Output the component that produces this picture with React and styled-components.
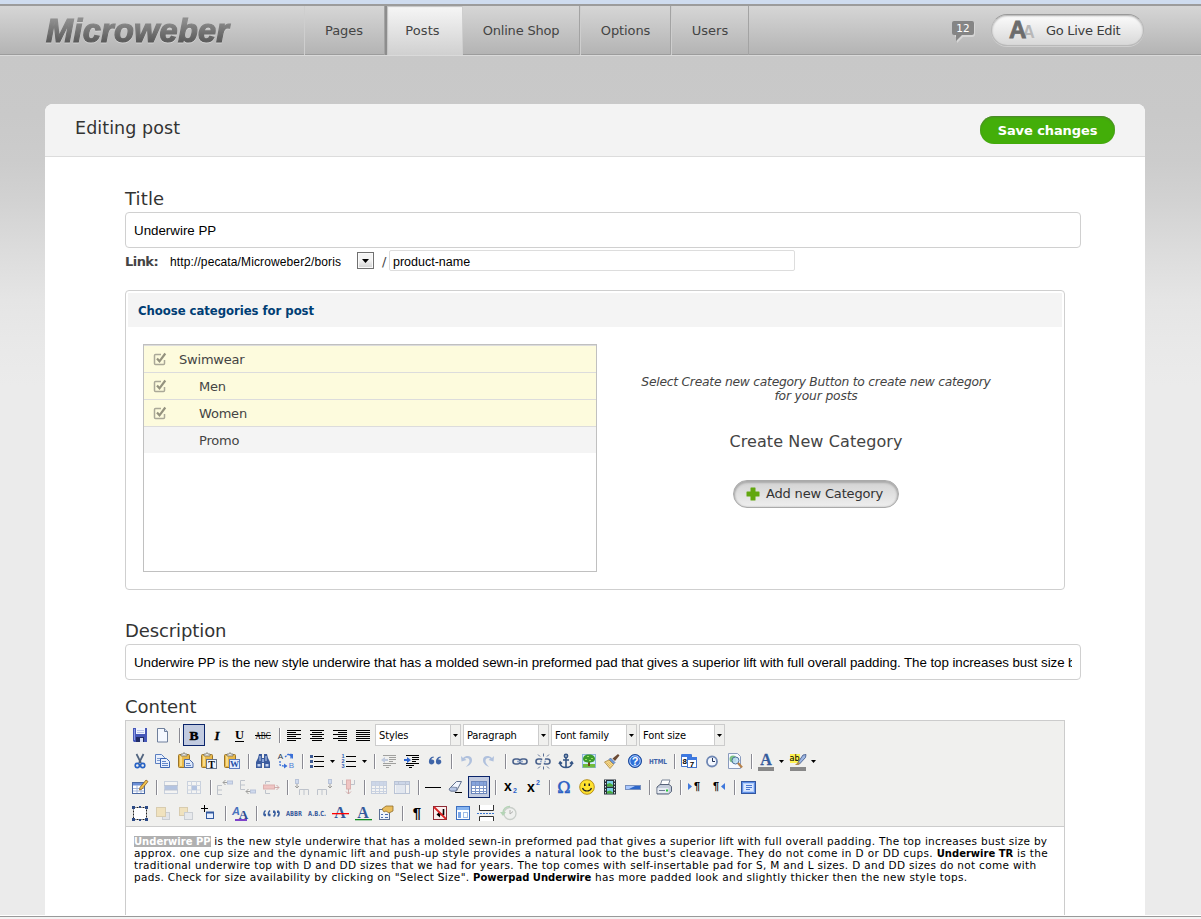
import React from "react";
import styled, { createGlobalStyle, css } from "styled-components";

const verdana = `Verdana, "DejaVu Sans", sans-serif`;
const arial = `"Liberation Sans", Arial, sans-serif`;
const tahoma = `"DejaVu Sans Condensed", "DejaVu Sans", Tahoma, sans-serif`;

const GlobalStyle = createGlobalStyle`
  * { box-sizing: border-box; }
  body { margin: 0; overflow: hidden; font-family: ${verdana}; font-size: 13px; color: #444; }
  p, h1, h2, h3, ul { margin: 0; padding: 0; font-weight: normal; }
  input, button { font-family: inherit; }
  svg { overflow: visible; flex: none; }
`;

const Page = styled.div`
  width: 1201px;
  height: 919px;
  display: flex;
  flex-direction: column;
  overflow: hidden;
  background: #f3f3f3;
`;

const TopStrip = styled.div`
  height: 4px;
  flex: none;
  background: #cfdcef;
`;

const Header = styled.header`
  height: 52px;
  flex: none;
  display: flex;
  border-top: 2px solid #9c9c9c;
  border-bottom: 1px solid #dadada;
  background: linear-gradient(#d6d6d6, #b3b3b3);
  box-shadow: inset 0 -1px #9c9c9c;
`;

const LogoBox = styled.div`
  width: 304px;
  padding: 6px 0 0 42px;
  flex: none;
  svg { filter: drop-shadow(0 1px 0 #d4d4d4); }
`;

const Nav = styled.nav`
  display: flex;
  flex: 1;
`;

const NavItem = styled.a`
  width: ${(p) => p.$w}px;
  padding-top: 16px;
  padding-right: ${(p) => p.$pull || 0}px;
  line-height: 17px;
  font-size: 13px;
  letter-spacing: ${(p) => p.$ls || 0}px;
  text-align: center;
  color: #444;
  border-left: 1px solid #cecece;
  border-right: 1px solid #a3a3a3;
  ${(p) =>
    p.$active &&
    css`
      border-left: 2px solid #8d8d8d;
      border-right: none;
      background: linear-gradient(#f6f6f6, #d0d0d0);
      box-shadow: inset 2px 2px 1px -1px #c4c4c4;
    `}
`;

const HeaderTools = styled.div`
  display: flex;
  align-items: flex-start;
  padding-right: 57px;
`;

const BubbleBox = styled.div`
  padding-top: 13px;
  margin-right: 15px;
  height: 40px;
`;

const LiveButton = styled.button`
  width: 153px;
  height: 32px;
  margin-top: 8px;
  padding: 0 0 0 17px;
  display: flex;
  align-items: center;
  gap: 11px;
  border: 1px solid #b9b9b9;
  border-top-color: #999;
  border-radius: 16px;
  background: linear-gradient(#fcfcfc, #d8d8d8);
  box-shadow: inset 0 1px 2px #aaa, 0 1px 0 #cfcfcf;
  font-size: 13px;
  letter-spacing: -0.3px;
  color: #3c3c3c;
`;

const Main = styled.main`
  height: 859px;
  flex: none;
  overflow: hidden;
  padding: 48px 56px 0 45px;
  background: linear-gradient(
    #c8c8c8 0,
    #c9c9c9 60px,
    #cccccc 105px,
    #d2d2d2 145px,
    #dcdcdc 195px,
    #e5e5e5 245px,
    #e9e9e9 295px,
    #ebebeb 330px
  );
`;

const BottomEdge = styled.div`
  height: 4px;
  flex: none;
  border-top: 1px solid #fff;
  background: linear-gradient(#999 0 1px, #f3f3f3 1px);
`;

const Card = styled.section`
  height: 900px;
  border-radius: 8px 8px 0 0;
  background: #fff;
`;

const CardHeader = styled.div`
  height: 53px;
  display: flex;
  justify-content: space-between;
  padding: 12px 30px 0;
  border-radius: 8px 8px 0 0;
  border-bottom: 1px solid #dcdcdc;
  background: #f3f3f3;
`;

const CardTitle = styled.h1`
  font-size: 17.5px;
  line-height: 24px;
  letter-spacing: 0.07px;
  color: #333;
`;

const SaveButton = styled.button`
  width: 135px;
  height: 28px;
  padding: 0;
  border: none;
  border-radius: 14px;
  background: #43ae09;
  box-shadow: inset 0 1px 2px #4f7f35;
  color: #fff;
  font-size: 13px;
  font-weight: bold;
  letter-spacing: -0.1px;
`;

const Form = styled.div`
  width: 956px;
  margin-left: 80px;
  padding-top: 30px;
`;

const Label = styled.h2`
  height: 25px;
  line-height: 24px;
  font-size: 18px;
  color: #333;
  letter-spacing: ${(p) => p.$ls || 0}px;
`;

const TextInput = styled.input`
  display: block;
  width: 100%;
  height: 36px;
  padding: 0 8px;
  border: 1px solid #d0d0d0;
  border-radius: 4px;
  outline: none;
  background: #fff;
  color: #000;
  font-family: ${arial};
  font-size: 13.33px;
  letter-spacing: ${(p) => p.$ls || 0}px;
`;

const LinkRow = styled.div`
  height: 42px;
  display: flex;
  align-items: flex-start;
  padding-top: 2px;
`;

const LinkLabel = styled.b`
  width: 45px;
  line-height: 23px;
  font-size: 13px;
  letter-spacing: -0.55px;
  color: #444;
`;

const LinkBase = styled.span`
  width: 187px;
  line-height: 24px;
  font-family: ${arial};
  font-size: 12px;
  letter-spacing: 0.12px;
  color: #000;
`;

const DropButton = styled.span`
  width: 17px;
  height: 17px;
  margin-top: 2px;
  display: flex;
  align-items: center;
  justify-content: center;
  border: 1px solid #707070;
  background: linear-gradient(#f4f4f4 45%, #d2d2d2);
  box-shadow: inset 0 0 0 1px #fafafa;
`;

const Slash = styled.span`
  width: 15px;
  line-height: 24px;
  padding-left: 8px;
  font-size: 13px;
`;

const SlugInput = styled(TextInput)`
  width: 406px;
  height: 21px;
  padding: 2px 3px 0;
  border-color: #ddd;
  border-radius: 2px;
  font-size: 12.5px;
`;

const Panel = styled.section`
  width: 940px;
  height: 300px;
  padding: 2px;
  margin-bottom: 29px;
  border: 1px solid #cfcfcf;
  border-radius: 4px;
`;

const PanelTitle = styled.h3`
  height: 34px;
  padding-left: 10px;
  line-height: 35px;
  background: #f4f4f4;
  color: #003e74;
  font-family: ${tahoma};
  font-size: 13px;
  font-weight: bold;
  letter-spacing: -0.05px;
`;

const PanelBody = styled.div`
  display: flex;
  padding: 17px 0 0 15px;
`;

const Tree = styled.ul`
  width: 454px;
  height: 228px;
  padding-top: 1px;
  border: 1px solid #c0c0c0;
  box-shadow: inset 0 1px #dcdcdc;
  list-style: none;
`;

const TreeItem = styled.li`
  height: 27px;
  display: flex;
  align-items: center;
  padding-left: 9px;
  background: ${(p) => (p.$on ? "#fdfbdd" : "#f4f4f4")};
  border-bottom: ${(p) => (p.$on ? "1px solid #dcdcdc" : "1px solid #fff")};
  font-size: 13px;
  letter-spacing: -0.2px;
  color: #444;
`;

const CheckSlot = styled.span`
  width: ${(p) => (p.$child ? 46 : 26)}px;
  height: 14px;
`;

const CreateBox = styled.div`
  flex: 1;
  display: flex;
  flex-direction: column;
  align-items: center;
  padding: 31px 0 0;
  margin-left: -27px;
  text-align: center;
`;

const Hint = styled.p`
  font-size: 12.3px;
  line-height: 14px;
  font-style: italic;
  letter-spacing: ${(p) => p.$ls || 0}px;
`;

const CreateTitle = styled.h3`
  margin-top: 28px;
  line-height: 22px;
  font-size: 16px;
  letter-spacing: 0.1px;
  color: #444;
`;

const AddButton = styled.button`
  width: 166px;
  height: 28px;
  margin-top: 27px;
  padding: 0 0 1px 12px;
  display: flex;
  align-items: center;
  gap: 6px;
  border: 1px solid #aaa;
  border-radius: 14px;
  background: linear-gradient(#d2d2d2, #efefef);
  box-shadow: inset 0 1px 2px 1px #aaa;
  color: #333;
  font-size: 13px;
  letter-spacing: -0.17px;
  white-space: nowrap;
`;

const Gap = styled.div`
  height: 15px;
`;

const Editor = styled.div`
  width: 940px;
  height: 240px;
  border: 1px solid #ccc;
`;

const Toolbars = styled.div`
  height: 106px;
  padding: 3px 3px 0;
  display: flex;
  flex-direction: column;
  gap: 4px;
  background: #f0f0ee;
  border-bottom: 1px solid #ccc;
`;

const ToolRow = styled.div`
  height: 22px;
  display: flex;
  gap: 1px;
`;

const ToolButton = styled.span`
  width: 22px;
  height: 22px;
  flex: none;
  border: 1px solid ${(p) => (p.$active ? "#0a246a" : "transparent")};
  background: ${(p) => (p.$active ? "#c2cbe0" : "transparent")};
  svg { display: block; opacity: ${(p) => (p.$off ? 0.33 : 1)}; }
`;

const SplitArrow = styled.span`
  width: 8px;
  height: 22px;
  padding-left: 1px;
  display: flex;
  align-items: center;
`;

const Separator = styled.span`
  width: 7px;
  height: 22px;
  padding: 4px 1px 3px 4px;
  &::before {
    content: "";
    display: block;
    width: 2px;
    height: 15px;
    background: linear-gradient(90deg, #8a8a92 50%, #fff 50%);
  }
`;

const Select = styled.span`
  width: 86px;
  height: 22px;
  margin-right: 1px;
  flex: none;
  display: flex;
  border: 1px solid #ccc;
  background: #fff;
  color: #000;
  font-family: ${tahoma};
  font-size: 11px;
  line-height: 22px;
  letter-spacing: -0.1px;
`;

const SelectText = styled.span`
  flex: 1;
  padding-left: 3px;
`;

const SelectArrow = styled.span`
  width: 10px;
  display: flex;
  align-items: center;
  justify-content: center;
  border-left: 1px solid #ccc;
  background: #f0f0ee;
`;

const Content = styled.div`
  padding: 8px 8px;
  color: #000;
  font-size: 10.5px;
  line-height: 12px;
`;

const Line = styled.p`
  height: 12px;
  white-space: pre;
  letter-spacing: ${(p) => p.$ls || 0}px;
  b { font-size: 10px; letter-spacing: 0; }
`;

const Selected = styled.b`
  background: #b0b0b0;
  color: #fff;
`;

const Triangle = ({ w = 6, h = 3 }) => (
  <svg width={w} height={h} viewBox="0 0 6 3" preserveAspectRatio="none">
    <path d="M0 0h6L3 3z" fill="#000" />
  </svg>
);

const T = ({ x = 10, y, s, c = "#000", f = "Liberation Serif", w = "bold", len, children, ...rest }) => (
  <text x={x} y={y} fontSize={s} fill={c} fontFamily={f} fontWeight={w} textAnchor="middle" textLength={len} lengthAdjust="spacingAndGlyphs" {...rest}>
    {children}
  </text>
);

const lines = (list, c = "#000") =>
  list.map(([x, y, w], i) => <rect key={i} x={x} y={y} width={w} height="1" fill={c} />);

const Clipboard = (
  <>
    <rect x="2.5" y="3.5" width="11" height="13" rx="1" fill="#e9b94a" stroke="#9a7428" />
    <path d="M4 5h2v10H4z" fill="#f8dc8a" />
    <path d="M5 5V3h2l1-1.500L9 3h2v2z" fill="#e5e5e5" stroke="#7d7a66" strokeWidth=".8" />
  </>
);

const Chain = (
  <g fill="none" stroke="#4a628c" strokeWidth="1.6">
    <rect x="3" y="8" width="7" height="5" rx="2.5" />
    <rect x="10" y="8" width="7" height="5" rx="2.5" />
    <path d="M7 10.500h6" stroke="#93a9cc" />
  </g>
);

const Grid = (
  <>
    <rect x="2.5" y="4.5" width="15" height="12" fill="#fff" stroke="#6c87bd" />
    <path d="M3 5h14v3H3z" fill="#86a4dc" />
    <path d="M3 8.500h14M3 11.500h14M3 14.500h14M6.500 5v11M10.500 5v11M14.500 5v11" stroke="#7d96c8" fill="none" />
  </>
);

const icons = {
  save: (
    <>
      <path d="M3 3h14v14H4l-1-1z" fill="#4658b8" />
      <path d="M4 4h1v11H4z" fill="#8d9ae6" />
      <path d="M6 3h9v6H6z" fill="#f0f3fd" />
      <path d="M7 5h7v1H7zM7 7h7v1H7z" fill="#b9c4ea" />
      <path d="M6 12h8v5H6z" fill="#222c66" />
      <path d="M10 13h3v4h-3z" fill="#d9dff6" />
    </>
  ),
  page: (
    <>
      <path d="M4.500 3.500h7l3 3v10.500h-10z" fill="#f4f8ff" stroke="#6f7f9b" />
      <path d="M11.500 3.500v3h3" fill="#cddcf5" stroke="#6f7f9b" />
    </>
  ),
  bold: <T y="14.500" s="13.500" stroke="#000" strokeWidth=".5">B</T>,
  italic: <T y="14.500" s="13" fontStyle="italic" stroke="#000" strokeWidth=".3">I</T>,
  underline: (
    <>
      <T x="9.500" y="14" s="12.500">U</T>
      {lines([[5, 16, 9]])}
    </>
  ),
  strike: (
    <>
      <T y="14" s="10" w="normal" len="15">ABC</T>
      {lines([[2, 10, 16]])}
    </>
  ),
  left: lines([[3, 5, 14], [3, 7, 9], [3, 9, 14], [3, 11, 9], [3, 13, 14], [3, 15, 9]]),
  center: lines([[3, 5, 14], [5, 7, 10], [3, 9, 14], [5, 11, 10], [3, 13, 14], [5, 15, 10]]),
  right: lines([[3, 5, 14], [8, 7, 9], [3, 9, 14], [8, 11, 9], [3, 13, 14], [8, 15, 9]]),
  full: lines([[3, 5, 14], [3, 7, 14], [3, 9, 14], [3, 11, 14], [3, 13, 14], [3, 15, 14]]),
  cut: (
    <>
      <path d="M6.500 3l4.500 9M13.500 3L9 12" stroke="#51647f" strokeWidth="1.700" />
      <circle cx="7.300" cy="14.500" r="2.100" fill="none" stroke="#2762c4" strokeWidth="1.600" />
      <circle cx="12.700" cy="14.500" r="2.100" fill="none" stroke="#2762c4" strokeWidth="1.600" />
    </>
  ),
  copy: (
    <>
      <path d="M2.500 3.500h6l3 3v6h-9z" fill="#e9f0fc" stroke="#5b7fc0" />
      <path d="M4 7.500h4M4 9.500h4" stroke="#7d9bd2" />
      <path d="M7.500 7.500h6l3 3v6h-9z" fill="#e9f0fc" stroke="#3d66b3" />
      <path d="M9 10.500h4M9 12.500h6M9 14.500h6" stroke="#6186c9" />
    </>
  ),
  paste: (
    <>
      {Clipboard}
      <path d="M8.500 8.500h5l3.500 3.500v4.500h-8.500z" fill="#dfeafc" stroke="#4a6aa8" />
      <path d="M10 12.500h4M10 14.500h5" stroke="#6889c4" />
    </>
  ),
  pastetext: (
    <>
      {Clipboard}
      <rect x="7.500" y="8.500" width="10" height="9" fill="#eef3fb" stroke="#67758d" />
      <T x="12.500" y="16.500" s="10">T</T>
    </>
  ),
  pasteword: (
    <>
      {Clipboard}
      <rect x="7.500" y="8.500" width="10" height="9" fill="#e4eeff" stroke="#5b7cc0" />
      <T x="12.500" y="16" s="9" c="#1f4ea8">W</T>
    </>
  ),
  find: (
    <>
      <path d="M6 3h3v4h2V3h3l1 4 2 4v6h-6v-5H9v5H3v-6l2-4z" fill="#3b5b9d" />
      <path d="M4.500 13h3v2.500h-3zM12.500 13h3v2.500h-3zM6.500 5h1v5h-1zM12.500 5h1v5h-1z" fill="#c3d3f2" />
      <path d="M9 8h2v3H9z" fill="#8aa4d8" />
    </>
  ),
  replace: (
    <>
      <T x="4.500" y="8" s="8" f="Liberation Sans" w="normal" c="#27354d">A</T>
      <T x="15.500" y="17" s="8" f="Liberation Sans" w="normal" c="#4e7fda">B</T>
      <path d="M9 6l3-2.500h3v4M4 10v4l5 1.500" fill="none" stroke="#3a70d8" strokeWidth="1.300" strokeDasharray="2 1" />
      <path d="M12 3h5v5zM8 12.500v5l3.500-2.500z" fill="#3a70d8" />
    </>
  ),
  bullets: (
    <>
      {lines([[7, 5, 10], [7, 10, 10], [7, 15, 10]])}
      <path d="M3 4h3v3H3zM3 9h3v3H3zM3 14h3v3H3z" fill="#3e5b93" />
    </>
  ),
  numbers: (
    <>
      {lines([[7, 5, 10], [7, 10, 10], [7, 15, 10]])}
      <T x="4" y="7.200" s="5.500" f="Liberation Sans" c="#2f5cb4">1</T>
      <T x="4" y="12.200" s="5.500" f="Liberation Sans" c="#2f5cb4">2</T>
      <T x="4" y="17.200" s="5.500" f="Liberation Sans" c="#2f5cb4">3</T>
    </>
  ),
  outdent: (
    <>
      {lines([[4, 4, 13], [10, 6, 7], [10, 8, 7], [10, 10, 4], [4, 12, 13], [4, 14, 8], [7, 16, 3]])}
      <path d="M2 9l4-3v2h3v2H6v2z" fill="#5d7fc0" />
    </>
  ),
  indent: (
    <>
      {lines([[4, 4, 13], [10, 6, 7], [10, 8, 7], [10, 10, 4], [4, 12, 13], [4, 14, 8], [7, 16, 3]])}
      <path d="M9 9L5 6v2H2v2h3v2z" fill="#2f66d0" />
    </>
  ),
  quote: (
    <path d="M8.500 5.500C5 6 3.500 8.500 4 11.500c.4 2.800 5.300 2.700 5.300-.8 0-1.800-1.500-2.600-3-2.200.2-1.200 1-1.800 2.700-2.100zM15.500 5.500c-3.500.5-5 3-4.500 6 .4 2.800 5.300 2.700 5.300-.8 0-1.800-1.500-2.600-3-2.200.2-1.200 1-1.800 2.700-2.100z" fill="#3f65a8" />
  ),
  undo: <path d="M5 5l.5 5.500 5-1.500-2-1.500c3-1.500 5 0 5 2.500s-2 4-3.500 6c3.500-1.500 6-3.500 6-7 0-4-5-5.500-9-2z" fill="#2f62bd" />,
  redo: <path d="M15 5l-.5 5.500-5-1.500 2-1.500c-3-1.500-5 0-5 2.500s2 4 3.500 6c-3.500-1.500-6-3.500-6-7 0-4 5-5.500 9-2z" fill="#2f62bd" />,
  link: Chain,
  unlink: (
    <>
      {Chain}
      <path d="M12 3L8 18" stroke="#f0f0ee" strokeWidth="2.500" />
      <path d="M5 3.500l2 2M10.500 2.500v3M16 3.500l-2 2M5 17.500l2-2M10.500 18.500v-3M16 17.500l-2-2" stroke="#5b6f94" />
    </>
  ),
  anchor: (
    <g fill="none" stroke="#355585" strokeWidth="1.600">
      <circle cx="10" cy="5" r="1.600" />
      <path d="M10 6.500V17M7 9h6M4 11.500c0 3 2.500 5 6 5s6-2 6-5M3 13l1.200-2L6 12.700M17 13l-1.200-2-1.800 1.700" />
    </g>
  ),
  image: (
    <>
      <rect x="3.500" y="3.500" width="13" height="13" fill="#d3ecff" stroke="#8fb4d8" />
      <path d="M4 13h12v3.500H4z" fill="#71bc3c" />
      <path d="M9 9h2v6H9z" fill="#6c4a1d" />
      <path d="M4 8c0-2.500 2-4.500 6-4.500s6 2 6 4.500-2.500 3.500-6 3.500-6-1-6-3.500z" fill="#3c9b2c" />
      <path d="M8 5h2v1H8zM12 7h2v1h-2zM6 8h2v1H6zM10 9h2v1h-2z" fill="#9bdf5f" />
    </>
  ),
  cleanup: (
    <>
      <path d="M16 3l1.500 1.500L13 10l-2.500-2.500z" fill="#6b4a34" />
      <path d="M8.500 7L13 11.500 11.500 13 7 8.500z" fill="#6d9be0" stroke="#4b6796" strokeWidth=".7" />
      <path d="M7 9l4.500 4.500L8 17.500 2.500 11z" fill="#f8dc8e" stroke="#a5803a" strokeWidth=".8" />
      <path d="M4.500 11.500l4 4M6 10.500l4 4" stroke="#d3a954" strokeWidth=".8" />
    </>
  ),
  help: (
    <>
      <circle cx="10" cy="10" r="6.500" fill="#2d6fd8" stroke="#1c4796" />
      <circle cx="10" cy="10" r="5.200" fill="none" stroke="#c9dcff" strokeWidth=".9" />
      <T y="14" s="11" f="Liberation Sans" c="#fff">?</T>
    </>
  ),
  html: <T y="13" s="7" f="DejaVu Sans" c="#3f62a8" len="18">HTML</T>,
  date: (
    <>
      <path d="M2.500 3.500h10v12h-10z" fill="#fff" stroke="#4474cc" />
      <path d="M3 3h9v3H3z" fill="#3e79e0" />
      <rect x="8.500" y="6.500" width="9" height="10" fill="#fff" stroke="#4474cc" />
      <path d="M8 6h10v3H8z" fill="#3e79e0" />
      <T x="5.800" y="13" s="8" f="Liberation Sans">8</T>
      <T x="13" y="15.500" s="8" f="Liberation Sans">7</T>
    </>
  ),
  time: (
    <>
      <circle cx="10" cy="10.500" r="5" fill="#f4f8ff" stroke="#7088b4" strokeWidth="1.800" />
      <path d="M10.500 7v3.500H13" stroke="#24355a" fill="none" />
    </>
  ),
  preview: (
    <>
      <path d="M3.500 2.500h9l3 3v12h-12z" fill="#f6f9ff" stroke="#8a9bbd" />
      <circle cx="8" cy="8" r="3.500" fill="#79c184" />
      <circle cx="10.500" cy="9.500" r="3.500" fill="#bfe1f8" fillOpacity=".85" stroke="#4e719c" />
      <path d="M13 12l4 4.500" stroke="#b8834b" strokeWidth="2.300" />
    </>
  ),
  forecolor: (
    <>
      <T y="13.500" s="16" c="#355a9c" stroke="#355a9c" strokeWidth=".3">A</T>
      <rect x="2" y="16" width="16" height="4" fill="#888" />
    </>
  ),
  backcolor: (
    <>
      <rect x="2" y="3" width="10" height="9" fill="#fdf250" />
      <T x="6.500" y="10" s="9" f="DejaVu Sans Condensed" w="normal">ab</T>
      <path d="M15 4l3-.5-.5 3-6 6.500-2 .5.500-2z" fill="#9db6e2" stroke="#3c5486" strokeWidth=".8" />
      <path d="M8 13l3-2 1 1.500L9.500 14H7z" fill="#b98d3c" />
      <rect x="2" y="16" width="16" height="4" fill="#888" />
    </>
  ),
  table: (
    <>
      <rect x="2.500" y="5.500" width="12" height="11" fill="#fff" stroke="#4b69a3" />
      <path d="M3 6h11v2.500H3z" fill="#6b8fd6" />
      <path d="M3 11.500h11M3 14h11M7 8v8M11 8v8" stroke="#a4b7dc" />
      <path d="M16 3l2 1.500-6 7.500-2.500 1 .5-2.500z" fill="#f2c34c" stroke="#8b5f23" strokeWidth=".8" />
    </>
  ),
  rowprops: (
    <>
      <rect x="3.500" y="4.500" width="13" height="12" fill="#fff" stroke="#7d93bd" />
      <path d="M4 9h12v4H4z" fill="#3e6cc9" />
      <path d="M3 8.500h14M3 13h14" stroke="#566d9c" />
    </>
  ),
  cellprops: (
    <>
      <rect x="3.500" y="4.500" width="13" height="12" fill="#fff" stroke="#7d93bd" />
      <path d="M3 8.500h14M3 13h14M7.500 4v12M12.500 4v12" stroke="#8ba0c8" />
      <path d="M8 9h5v4H8z" fill="#3e6cc9" />
    </>
  ),
  rowbefore: (
    <>
      <path d="M2.500 8.500H7M2.500 8.500v9M2.500 13H7M2.500 17.500H7" stroke="#5a6a86" fill="none" />
      <path d="M8 5.500h4M10.500 3L8 5.500 10.500 8" stroke="#000" fill="none" />
      <rect x="12.500" y="4" width="5" height="3" fill="#8eaef0" stroke="#4a69ad" />
    </>
  ),
  rowafter: (
    <>
      <path d="M2.500 3.500H7M2.500 3.500v9M2.500 8H7M2.500 12.500H7" stroke="#5a6a86" fill="none" />
      <path d="M8 14.500h4M10.500 12L8 14.500l2.500 2.500" stroke="#000" fill="none" />
      <rect x="12.500" y="13" width="5" height="3" fill="#8eaef0" stroke="#4a69ad" />
    </>
  ),
  delrow: (
    <>
      <path d="M9 4.500H4.500V7M9 16.500H4.500V13" stroke="#5a6a86" fill="none" />
      <rect x="2.500" y="8" width="11" height="4" fill="#ee6f6f" stroke="#b53030" />
      <path d="M13 10.500h5M15.500 8l2.500 2.500-2.500 2.500" stroke="#8b2222" fill="none" />
    </>
  ),
  colbefore: (
    <>
      <rect x="3.500" y="2.500" width="3" height="4" fill="#8eaef0" stroke="#4a69ad" />
      <path d="M5 7v4M3 9l2 2 2-2" stroke="#000" fill="none" />
      <path d="M7.500 18v-5.500h9V18M12 12.500V18" stroke="#5a6a86" fill="none" />
    </>
  ),
  colafter: (
    <>
      <rect x="13.500" y="2.500" width="3" height="4" fill="#8eaef0" stroke="#4a69ad" />
      <path d="M15 7v4M13 9l2 2 2-2" stroke="#000" fill="none" />
      <path d="M2.500 18v-5.500h9V18M7 12.500V18" stroke="#5a6a86" fill="none" />
    </>
  ),
  delcol: (
    <>
      <path d="M4.500 3v4.500H8M16.500 3v4.500H12" stroke="#5a6a86" fill="none" />
      <rect x="8.500" y="3" width="4" height="9" fill="#ee6f6f" stroke="#b53030" />
      <path d="M10.500 12v5M8 14.500l2.500 2.500 2.500-2.500" stroke="#8b2222" fill="none" />
    </>
  ),
  split: Grid,
  merge: (
    <>
      <rect x="2.500" y="4.500" width="15" height="12" fill="#fff" stroke="#4b69a3" />
      <path d="M3 5h14v2H3z" fill="#86a4dc" />
      <path d="M3 7.500h14M6.500 5v3M13.500 5v11" stroke="#5470a6" />
      <path d="M4 8h9v8H4z" fill="#c7d6f4" />
    </>
  ),
  hr: lines([[2, 10, 16]]),
  eraser: (
    <>
      <path d="M10.500 4.500h5L10.500 14h-6L3 12z" fill="#f1f5fd" stroke="#61718f" />
      <path d="M3 12l2-2 6 .5-1 3.500H4.500z" fill="#b7c7e6" stroke="#61718f" strokeWidth=".7" />
      {lines([[9, 15, 7]])}
    </>
  ),
  grid: Grid,
  sub: (
    <>
      <T x="8" y="14" s="14" f="Liberation Sans">x</T>
      <T x="15" y="16" s="7" f="Liberation Sans" c="#2b61c8">2</T>
    </>
  ),
  sup: (
    <>
      <T x="8" y="15" s="14" f="Liberation Sans">x</T>
      <T x="15" y="8" s="7" f="Liberation Sans" c="#2b61c8">2</T>
    </>
  ),
  omega: <T y="15.500" s="16" f="DejaVu Serif" w="normal" c="#2b5fc4" stroke="#2b5fc4" strokeWidth=".5">Ω</T>,
  smile: (
    <>
      <circle cx="10" cy="10" r="7.300" fill="#ffe22e" stroke="#b8911b" />
      <path d="M7 6.500h1.500v2.500H7zM11.500 6.500H13v2.500h-1.500z" fill="#222" />
      <path d="M5.500 11c1.500 4 7.500 4 9 0" fill="none" stroke="#222" strokeWidth="1.200" />
    </>
  ),
  film: (
    <>
      <path d="M4 2.500h12v15H4z" fill="#27313a" />
      <path d="M7 4h6v5.500H7zM7 11h6v5.500H7z" fill="#7fd0e8" />
      <path d="M7 7l3-1 3 2v1.500H7zM7 14.500l3-1 3 2v1H7z" fill="#4cae3a" />
      <path d="M5.500 3v15M14.500 3v15" stroke="#d5dde4" strokeDasharray="1.500 1.500" />
    </>
  ),
  bar: (
    <>
      <rect x="2.500" y="8.500" width="15" height="4" fill="#2d66c9" stroke="#7890bd" />
      <path d="M3 9h9l-6 3H3z" fill="#a9c8ff" />
    </>
  ),
  print: (
    <>
      <path d="M6 9l2-6h8l-2 6z" fill="#fff" stroke="#7b8699" />
      <path d="M3 10l3-2.500h9l2.500 2v5l-3 2.500H3z" fill="#c4ccda" stroke="#58647a" />
      <path d="M3.500 11h11v5h-11z" fill="#e8ecf3" />
      <path d="M12 12.500h2v2h-2z" fill="#29c53a" />
      <path d="M5 13.500h6" stroke="#6f7c93" />
    </>
  ),
  ltr: (
    <>
      <path d="M3 6l4 3.500L3 13z" fill="#3f78dc" />
      <T x="12" y="13" s="11" f="Liberation Sans">¶</T>
    </>
  ),
  rtl: (
    <>
      <path d="M17 6l-4 3.500 4 3.500z" fill="#3f78dc" />
      <T x="8" y="13" s="11" f="Liberation Sans">¶</T>
    </>
  ),
  fullscreen: (
    <>
      <rect x="2.500" y="4.500" width="14" height="12" fill="#5f90e6" stroke="#3256a0" />
      <rect x="4.500" y="6.500" width="10" height="8" fill="#d9e7ff" stroke="#b4cefa" />
      <path d="M7 8.500h6M7 10.500h6M7 12.500h4" stroke="#4a78d0" />
    </>
  ),
  layer: (
    <>
      <rect x="3.500" y="4.500" width="13" height="12" fill="#fff" stroke="#222" strokeDasharray="2 1" />
      <path d="M2 3h3v3H2zM15 3h3v3h-3zM2 15h3v3H2zM15 15h3v3h-3zM9 3h2v2H9zM9 16h2v2H9z" fill="#2c4a86" />
    </>
  ),
  forward: (
    <>
      <rect x="9.500" y="9.500" width="7" height="7" fill="#c6cedd" stroke="#808b9f" />
      <rect x="3.500" y="4.500" width="9" height="9" fill="#f0c860" stroke="#a98533" />
    </>
  ),
  backward: (
    <>
      <rect x="3.500" y="4.500" width="8" height="8" fill="#f0c860" stroke="#a98533" />
      <rect x="8.500" y="9.500" width="8" height="7" fill="#d6dce8" stroke="#808b9f" />
    </>
  ),
  abs: (
    <>
      <path d="M2 5.500h7M5.500 2v7" stroke="#000" />
      <rect x="7.500" y="9.500" width="7" height="6" fill="#e6efff" stroke="#31599f" />
      <path d="M7 9.500h8" stroke="#31599f" strokeWidth="2" />
    </>
  ),
  styleprops: (
    <>
      <T x="6" y="12" s="11" f="Liberation Sans" fontStyle="italic" c="#4971bd">A</T>
      <T x="13.500" y="15.500" s="13" c="#2c4d94">A</T>
      <rect x="5" y="16" width="12" height="2" fill="#7d43c9" />
    </>
  ),
  cite: (
    <g fill="none" stroke="#3a5f9f" strokeWidth="1.500">
      <path d="M4.500 7.500C3 8.500 2.700 10 3 12.500M9 7.500C7.500 8.500 7.200 10 7.500 12.500M12.500 13.500c1.500-1 1.800-2.500 1.500-5M16.500 13.500c1.500-1 1.800-2.500 1.500-5" />
      <path d="M3 12h2M7.500 12h2M12 8.700h2M16 8.700h2" strokeWidth="2.500" />
    </g>
  ),
  abbr: <T y="13" s="7" f="DejaVu Sans" c="#3a5c9c" len="16">ABBR</T>,
  acronym: <T y="13" s="7" f="DejaVu Sans" c="#3a5c9c" len="18">A.B.C.</T>,
  del: (
    <>
      <T y="15" s="16" c="#355a9c">A</T>
      <rect x="2" y="10" width="17" height="1.300" fill="#ff0000" />
    </>
  ),
  ins: (
    <>
      <T y="15" s="16" c="#355a9c">A</T>
      <rect x="2" y="16" width="17" height="1.300" fill="#128a22" />
    </>
  ),
  attribs: (
    <>
      <rect x="3.500" y="6.500" width="10" height="10" fill="#eef3fb" stroke="#5b6f95" />
      <path d="M5 11.500h2M9 11.500h3M5 14.500h2M9 14.500h3" stroke="#4b6cae" />
      <path d="M6 6l4-3 7 0v5l-4 2-3-2-2 1z" fill="#e9bd5d" stroke="#8f6c2a" strokeWidth=".8" />
    </>
  ),
  para: <T y="15" s="15" f="Liberation Sans">¶</T>,
  nbsp: (
    <>
      <rect x="3.500" y="3.500" width="13" height="13" fill="#fbeeee" stroke="#8d2b35" />
      <path d="M13.500 6v5.500H8" fill="none" stroke="#000" strokeWidth="1.600" />
      <path d="M10 8.500v6L6.500 11.500z" fill="#000" />
      <path d="M4 4l12 12" stroke="#dc2424" strokeWidth="1.800" />
    </>
  ),
  template: (
    <>
      <rect x="3.500" y="3.500" width="13" height="13" fill="#fff" stroke="#3c6fc0" />
      <path d="M4 4h12v3H4z" fill="#86b4f0" />
      <path d="M5 9h3v6H5z" fill="#7ba6e6" />
      <rect x="10.500" y="9.500" width="4" height="5" fill="#fff" stroke="#9fbde8" />
    </>
  ),
  pagebreak: (
    <>
      <path d="M3.500 2v5.500h14V2M3.500 18v-4.500h14V18" fill="#fff" stroke="#333" />
      <path d="M1 10.500h18" stroke="#3976cf" strokeDasharray="2 1" />
    </>
  ),
  restore: (
    <>
      <circle cx="11" cy="10.500" r="6" fill="#eef2ee" stroke="#7a8a7f" strokeWidth="1.300" />
      <path d="M11 7v4l3-2.500" fill="none" stroke="#333" />
      <path d="M1 9h6l-3 4z" fill="#3c9c45" />
      <path d="M4 10c0-4 3-6.500 7-6.500" fill="none" stroke="#3c9c45" strokeWidth="1.600" />
    </>
  ),
};

// "|" is a separator, "-" marks a disabled tool, "+" a pressed one, "^" a split button.
const toolRows = [
  "save page | +bold italic underline strike | left center right full",
  "cut copy paste pastetext pasteword | find replace | ^bullets ^numbers | -outdent indent quote | -undo -redo | link unlink anchor image cleanup help html | date time preview | ^forecolor ^backcolor",
  "table | -rowprops -cellprops | -rowbefore -rowafter -delrow | -colbefore -colafter -delcol | -split -merge | hr eraser +grid | sub sup | omega smile film bar | print | ltr rtl | fullscreen",
  "layer -forward -backward abs | styleprops | cite abbr acronym del ins attribs | para nbsp template pagebreak -restore",
];

const Tool = ({ spec }) => {
  if (spec === "|") return <Separator />;
  const name = spec.replace(/^[-+^]/, "");
  return (
    <>
      <ToolButton $active={spec[0] === "+"} $off={spec[0] === "-"}>
        <svg width="20" height="20" viewBox="0 0 20 20">{icons[name]}</svg>
      </ToolButton>
      {spec[0] === "^" && (
        <SplitArrow>
          <Triangle w={5} />
        </SplitArrow>
      )}
    </>
  );
};

const Logo = () => (
  <svg width="192" height="36" viewBox="0 0 192 36">
    <defs>
      <linearGradient id="logo" x1="0" y1="0" x2="0" y2="1">
        <stop offset=".2" stopColor="#8e8e8e" />
        <stop offset=".85" stopColor="#565656" />
      </linearGradient>
    </defs>
    <text
      x="4"
      y="30"
      fill="url(#logo)"
      stroke="url(#logo)"
      strokeWidth="1.200"
      textLength="183"
      fontFamily="Liberation Sans"
      fontWeight="bold"
      fontStyle="italic"
      fontSize="32.500"
    >
      Microweber
    </text>
  </svg>
);

const Bubble = () => (
  <svg width="26" height="26" viewBox="0 0 26 26">
    <path d="M5 3h17a3 3 0 0 1 3 3v9a3 3 0 0 1-3 3h-9l-6 6v-6H5z" fill="#d6d6d6" />
    <path d="M4 2h18a2 2 0 0 1 2 2v10a2 2 0 0 1-2 2H12l-6 6v-6H4a2 2 0 0 1-2-2V4a2 2 0 0 1 2-2z" fill="#858585" />
    <text x="13" y="13" textAnchor="middle" fontFamily="DejaVu Sans" fontSize="10.500" fill="#fff">12</text>
  </svg>
);

const LiveIcon = () => (
  <svg width="26" height="22" viewBox="0 0 26 22">
    <g fontFamily="Liberation Sans" fontWeight="bold">
      <text x="13.500" y="18.500" fontSize="19" fill="#b8b8b8" textLength="12" lengthAdjust="spacingAndGlyphs">A</text>
      <text x="0" y="19" fontSize="24" fill="#6c6c6c" stroke="#6c6c6c" strokeWidth=".8">A</text>
    </g>
  </svg>
);

const Check = () => (
  <svg width="14" height="14" viewBox="0 0 14 14" fill="none">
    <path d="M8 2.500H2.500A1 1 0 0 0 1.500 3.500v8a1 1 0 0 0 1 1h8a1 1 0 0 0 1-1V8" stroke="#aaa898" strokeWidth="1.500" />
    <path d="M4 6.500L6.500 9.300 12.300 1.500" stroke="#94927f" strokeWidth="2.200" />
  </svg>
);

const Plus = () => (
  <svg width="14" height="14" viewBox="0 0 14 14">
    <path d="M5 .5h4a.5.5 0 0 1 .5.5v3.500H13a.5.5 0 0 1 .5.5v4a.5.5 0 0 1-.5.5H9.500V13a.5.5 0 0 1-.5.5H5a.5.5 0 0 1-.5-.5V9.500H1a.5.5 0 0 1-.5-.5V5a.5.5 0 0 1 .5-.5h3.500V1a.5.5 0 0 1 .5-.5z" fill="#62a70f" />
  </svg>
);

const categories = [
  { name: "Swimwear", on: true },
  { name: "Men", on: true, child: true },
  { name: "Women", on: true, child: true },
  { name: "Promo", child: true },
];

export default function App() {
  return (
    <Page>
      <GlobalStyle />
      <TopStrip />
      <Header>
        <LogoBox>
          <Logo />
        </LogoBox>
        <Nav>
          <NavItem $w={81} $pull={1}>Pages</NavItem>
          <NavItem $w={77} $pull={4} $ls={0.1} $active>Posts</NavItem>
          <NavItem $w={118} $ls={-0.2}>Online Shop</NavItem>
          <NavItem $w={91} $ls={-0.1}>Options</NavItem>
          <NavItem $w={78}>Users</NavItem>
        </Nav>
        <HeaderTools>
          <BubbleBox>
            <Bubble />
          </BubbleBox>
          <LiveButton>
            <LiveIcon />
            Go Live Edit
          </LiveButton>
        </HeaderTools>
      </Header>
      <Main>
        <Card>
          <CardHeader>
            <CardTitle>Editing post</CardTitle>
            <SaveButton>Save changes</SaveButton>
          </CardHeader>
          <Form>
            <Label $ls={0.15}>Title</Label>
            <TextInput defaultValue="Underwire PP" />
            <LinkRow>
              <LinkLabel>Link:</LinkLabel>
              <LinkBase>http://pecata/Microweber2/boris</LinkBase>
              <DropButton>
                <Triangle w={7} h={4} />
              </DropButton>
              <Slash>/</Slash>
              <SlugInput defaultValue="product-name" />
            </LinkRow>
            <Panel>
              <PanelTitle>Choose categories for post</PanelTitle>
              <PanelBody>
                <Tree>
                  {categories.map((c) => (
                    <TreeItem key={c.name} $on={c.on}>
                      <CheckSlot $child={c.child}>{c.on && <Check />}</CheckSlot>
                      {c.name}
                    </TreeItem>
                  ))}
                </Tree>
                <CreateBox>
                  <Hint $ls={-0.24}>Select Create new category Button to create new category</Hint>
                  <Hint $ls={-0.15}>for your posts</Hint>
                  <CreateTitle>Create New Category</CreateTitle>
                  <AddButton>
                    <Plus />
                    Add new Category
                  </AddButton>
                </CreateBox>
              </PanelBody>
            </Panel>
            <Label $ls={-0.1}>Description</Label>
            <TextInput
              $ls={-0.066}
              defaultValue="Underwire PP is the new style underwire that has a molded sewn-in preformed pad that gives a superior lift with full overall padding. The top increases bust size by approx. one cup size"
            />
            <Gap />
            <Label>Content</Label>
            <Editor>
              <Toolbars>
                {toolRows.map((row, i) => (
                  <ToolRow key={row}>
                    {row.split(" ").map((spec, j) => (
                      <Tool key={j} spec={spec} />
                    ))}
                    {i === 0 &&
                      ["Styles", "Paragraph", "Font family", "Font size"].map((label) => (
                        <Select key={label}>
                          <SelectText>{label}</SelectText>
                          <SelectArrow>
                            <Triangle w={5} />
                          </SelectArrow>
                        </Select>
                      ))}
                  </ToolRow>
                ))}
              </Toolbars>
              <Content>
                <Line $ls={0.3}>
                  <Selected>Underwire PP</Selected> is the new style underwire that has a molded sewn-in preformed pad that gives a superior lift with full overall padding. The top increases bust size by
                </Line>
                <Line $ls={0.353}>
                  approx. one cup size and the dynamic lift and push-up style provides a natural look to the bust's cleavage. They do not come in D or DD cups. <b>Underwire TR</b> is the
                </Line>
                <Line $ls={0.31}>
                  traditional underwire top with D and DD sizes that we had for years. The top comes with self-insertable pad for S, M and L sizes. D and DD sizes do not come with
                </Line>
                <Line $ls={0.318}>
                  pads. Check for size availability by clicking on "Select Size". <b>Powerpad Underwire</b> has more padded look and slightly thicker then the new style tops.
                </Line>
              </Content>
            </Editor>
          </Form>
        </Card>
      </Main>
      <BottomEdge />
    </Page>
  );
}
